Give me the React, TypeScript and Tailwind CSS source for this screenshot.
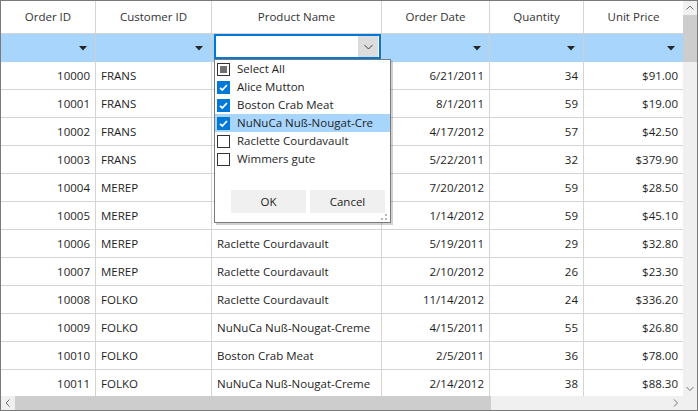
import React from "react";

const rows: string[][] = [
  ["10000", "FRANS", "", "6/21/2011", "34", "$91.00"],
  ["10001", "FRANS", "", "8/1/2011", "59", "$19.00"],
  ["10002", "FRANS", "", "4/17/2012", "57", "$42.50"],
  ["10003", "FRANS", "", "5/22/2011", "32", "$379.90"],
  ["10004", "MEREP", "", "7/20/2012", "59", "$28.50"],
  ["10005", "MEREP", "", "1/14/2012", "59", "$45.10"],
  ["10006", "MEREP", "Raclette Courdavault", "5/19/2011", "29", "$32.80"],
  ["10007", "MEREP", "Raclette Courdavault", "2/10/2012", "26", "$23.30"],
  ["10008", "FOLKO", "Raclette Courdavault", "11/14/2012", "24", "$336.20"],
  ["10009", "FOLKO", "NuNuCa Nuß-Nougat-Creme", "4/15/2011", "55", "$26.80"],
  ["10010", "FOLKO", "Boston Crab Meat", "2/5/2011", "36", "$78.00"],
  ["10011", "FOLKO", "NuNuCa Nuß-Nougat-Creme", "2/14/2012", "38", "$88.30"],
];

const widths = ["w-[95px]", "w-[116px]", "w-[170px]", "w-[108px]", "w-[94px]", "w-[99px]"];
const titles = ["Order ID", "Customer ID", "Product Name", "Order Date", "Quantity", "Unit Price"];
const rightAligned = [true, false, false, true, true, true];

function Chevron({ dir }: { dir: "up" | "down" | "left" | "right" }) {
  const d =
    dir === "up"
      ? "M0.5 4.5 L4 1 L7.5 4.5"
      : dir === "down"
      ? "M0.5 1 L4 4.5 L7.5 1"
      : dir === "left"
      ? "M4.5 0.5 L1 4 L4.5 7.5"
      : "M1 0.5 L4.5 4 L1 7.5";
  const w = dir === "up" || dir === "down" ? 8 : 6;
  const h = dir === "up" || dir === "down" ? 6 : 8;
  return (
    <svg width={w} height={h} viewBox={`0 0 ${w} ${h}`} className="block">
      <path d={d} fill="none" stroke="#707070" strokeWidth="1" />
    </svg>
  );
}

function FilterTriangle() {
  return (
    <svg width="8" height="5" viewBox="0 0 8 5" className="block">
      <path d="M0 0 L8 0 L4 4.5 Z" fill="#262626" />
    </svg>
  );
}

function CheckBox({ state }: { state: "checked" | "unchecked" | "partial" }) {
  if (state === "checked") {
    return (
      <div className="w-[13px] h-[13px] bg-[#0078d7] flex items-center justify-center shrink-0">
        <svg width="11" height="11" viewBox="0 0 11 11" className="block">
          <path d="M2 5.8 L4.3 8 L9 3" fill="none" stroke="#ffffff" strokeWidth="1.8" />
        </svg>
      </div>
    );
  }
  if (state === "partial") {
    return (
      <div className="w-[13px] h-[13px] border border-[#333333] bg-white flex items-center justify-center shrink-0">
        <div className="w-[7px] h-[7px] bg-[#707070]" />
      </div>
    );
  }
  return <div className="w-[13px] h-[13px] border border-[#333333] bg-white shrink-0" />;
}

const items: { label: string; state: "checked" | "unchecked" | "partial"; hl?: boolean }[] = [
  { label: "Select All", state: "partial" },
  { label: "Alice Mutton", state: "checked" },
  { label: "Boston Crab Meat", state: "checked" },
  { label: "NuNuCa Nuß-Nougat-Cre", state: "checked", hl: true },
  { label: "Raclette Courdavault", state: "unchecked" },
  { label: "Wimmers gute", state: "unchecked" },
];

export default function App() {
  return (
    <div
      className="relative w-[698px] h-[411px] border border-[#7a7a7a] bg-white flex flex-col overflow-hidden text-[11.5px] text-[#1e1e1e]"
      style={{ fontFamily: '"Open Sans", "Noto Sans", sans-serif' }}
    >
      <div className="flex h-[395px]">
        {/* grid */}
        <div className="w-[682px] h-[395px] overflow-hidden flex flex-col">
          {/* header */}
          <div className="flex h-[33px] shrink-0 border-b border-[#d4d4d4]">
            {titles.map((t, i) => (
              <div
                key={t}
                className={`${widths[i]} h-full flex items-center justify-center text-[#333333] ${
                  i < 5 ? "border-r border-[#d4d4d4]" : ""
                }`}
              >
                {t}
              </div>
            ))}
          </div>
          {/* filter row */}
          <div className="flex h-[28px] shrink-0 bg-[#a7d5fc]">
            {titles.map((t, i) =>
              i === 2 ? (
                <div key={t} className={`${widths[i]} h-full border-r border-[#d0d0d0] flex items-start pl-[2px]`}>
                  <div className="flex-1 h-[25px] border-2 border-[#0078d7] bg-white flex justify-end">
                    <div className="w-[20px] h-full mr-[1px] bg-[#dcdcdc] flex items-center justify-center">
                      <svg width="9" height="6" viewBox="0 0 9 6" className="block">
                        <path d="M0.5 1 L4.5 5 L8.5 1" fill="none" stroke="#404040" strokeWidth="1" />
                      </svg>
                    </div>
                  </div>
                </div>
              ) : (
                <div
                  key={t}
                  className={`${widths[i]} h-full flex items-center justify-end pr-[8px] ${
                    i < 5 ? "border-r border-[#d0d0d0]" : ""
                  }`}
                >
                  <FilterTriangle />
                </div>
              )
            )}
          </div>
          {/* data rows */}
          {rows.map((r) => (
            <div key={r[0]} className="flex h-[28px] shrink-0 border-b border-[#d4d4d4]">
              {r.map((c, i) => (
                <div
                  key={i}
                  className={`${widths[i]} h-full flex items-center px-[5px] whitespace-nowrap overflow-hidden ${
                    rightAligned[i] ? "justify-end" : "justify-start"
                  } ${i < 5 ? "border-r border-[#d4d4d4]" : ""}`}
                >
                  {c}
                </div>
              ))}
            </div>
          ))}
        </div>
        {/* vertical scrollbar */}
        <div className="w-[14px] h-full bg-[#f0f0f0] flex flex-col">
          <div className="h-[14px] flex items-center justify-center">
            <Chevron dir="up" />
          </div>
          <div className="h-[47px] bg-[#cdcdcd]" />
          <div className="flex-1" />
          <div className="h-[14px] flex items-center justify-center">
            <Chevron dir="down" />
          </div>
        </div>
      </div>
      {/* horizontal scrollbar */}
      <div className="h-[14px] flex bg-[#f0f0f0]">
        <div className="w-[14px] h-full flex items-center justify-center">
          <Chevron dir="left" />
        </div>
        <div className="w-[476px] h-full bg-[#cdcdcd]" />
        <div className="flex-1" />
        <div className="w-[14px] h-full flex items-center justify-center">
          <Chevron dir="right" />
        </div>
        <div className="w-[14px] h-full" />
      </div>

      {/* filter popup */}
      <div className="absolute left-[213px] top-[58px] w-[177px] h-[164px] border border-[#7a7a7a] bg-white shadow-[2px_2px_0_rgba(0,0,0,0.18)] flex flex-col">
        <div className="flex flex-col">
          {items.map((it) => (
            <div
              key={it.label}
              className={`h-[18px] flex items-center gap-[7px] pl-[2px] whitespace-nowrap ${
                it.hl ? "bg-[#a7d5fc]" : ""
              }`}
            >
              <CheckBox state={it.state} />
              <span>{it.label}</span>
            </div>
          ))}
        </div>
        <div className="flex justify-end gap-[4px] pr-[5px] mt-[22px]">
          <div className="w-[75px] h-[23px] bg-[#f0f0f0] flex items-center justify-center">OK</div>
          <div className="w-[75px] h-[23px] bg-[#f0f0f0] flex items-center justify-center">Cancel</div>
        </div>
        <div className="absolute right-[3px] bottom-[2px] w-[6px] h-[6px]">
          <div className="absolute right-0 top-0 w-[2px] h-[2px] bg-[#b8b8b8]" />
          <div className="absolute right-0 bottom-0 w-[2px] h-[2px] bg-[#b8b8b8]" />
          <div className="absolute left-0 bottom-0 w-[2px] h-[2px] bg-[#b8b8b8]" />
        </div>
      </div>
    </div>
  );
}
